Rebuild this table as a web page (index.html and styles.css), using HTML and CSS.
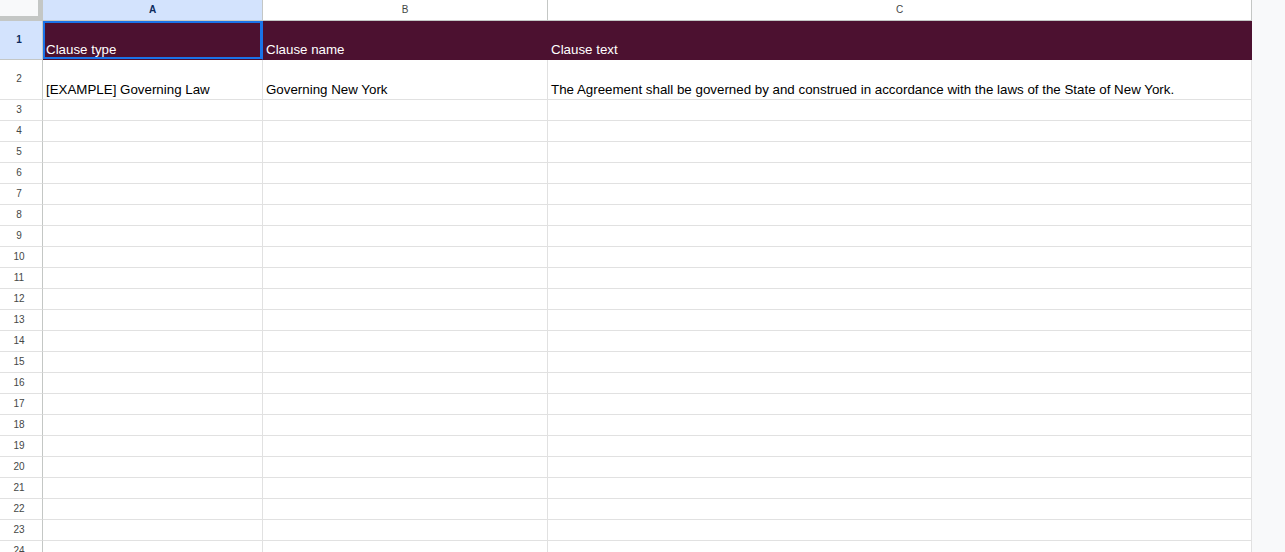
FILE: index.html
```html
<!DOCTYPE html>
<html>
<head>
<meta charset="utf-8">
<link rel="stylesheet" href="styles.css">
</head>
<body>
<div class="page">
  <div class="sheet">
    <div class="corner"></div>
    <div class="colhead active">A</div>
    <div class="colhead">B</div>
    <div class="colhead">C</div>

    <div class="rowhead active r1">1</div>
    <div class="cell hdr selected">Clause type</div>
    <div class="cell hdr">Clause name</div>
    <div class="cell hdr">Clause text</div>

    <div class="rowhead r2">2</div>
    <div class="cell r2c">[EXAMPLE] Governing Law</div>
    <div class="cell r2c">Governing New York</div>
    <div class="cell r2c">The Agreement shall be governed by and construed in accordance with the laws of the State of New York.</div>

    <div class="rowhead">3</div><div class="cell"></div><div class="cell"></div><div class="cell"></div>
    <div class="rowhead">4</div><div class="cell"></div><div class="cell"></div><div class="cell"></div>
    <div class="rowhead">5</div><div class="cell"></div><div class="cell"></div><div class="cell"></div>
    <div class="rowhead">6</div><div class="cell"></div><div class="cell"></div><div class="cell"></div>
    <div class="rowhead">7</div><div class="cell"></div><div class="cell"></div><div class="cell"></div>
    <div class="rowhead">8</div><div class="cell"></div><div class="cell"></div><div class="cell"></div>
    <div class="rowhead">9</div><div class="cell"></div><div class="cell"></div><div class="cell"></div>
    <div class="rowhead">10</div><div class="cell"></div><div class="cell"></div><div class="cell"></div>
    <div class="rowhead">11</div><div class="cell"></div><div class="cell"></div><div class="cell"></div>
    <div class="rowhead">12</div><div class="cell"></div><div class="cell"></div><div class="cell"></div>
    <div class="rowhead">13</div><div class="cell"></div><div class="cell"></div><div class="cell"></div>
    <div class="rowhead">14</div><div class="cell"></div><div class="cell"></div><div class="cell"></div>
    <div class="rowhead">15</div><div class="cell"></div><div class="cell"></div><div class="cell"></div>
    <div class="rowhead">16</div><div class="cell"></div><div class="cell"></div><div class="cell"></div>
    <div class="rowhead">17</div><div class="cell"></div><div class="cell"></div><div class="cell"></div>
    <div class="rowhead">18</div><div class="cell"></div><div class="cell"></div><div class="cell"></div>
    <div class="rowhead">19</div><div class="cell"></div><div class="cell"></div><div class="cell"></div>
    <div class="rowhead">20</div><div class="cell"></div><div class="cell"></div><div class="cell"></div>
    <div class="rowhead">21</div><div class="cell"></div><div class="cell"></div><div class="cell"></div>
    <div class="rowhead">22</div><div class="cell"></div><div class="cell"></div><div class="cell"></div>
    <div class="rowhead">23</div><div class="cell"></div><div class="cell"></div><div class="cell"></div>
    <div class="rowhead">24</div><div class="cell"></div><div class="cell"></div><div class="cell"></div>
    <div class="rowhead">25</div><div class="cell"></div><div class="cell"></div><div class="cell"></div>
  </div>
  <div class="side"></div>
</div>
</body>
</html>
```

FILE: styles.css
```css
html, body {
  margin: 0;
  padding: 0;
  height: 100%;
  overflow: hidden;
  background: #ffffff;
  font-family: "Liberation Sans", Arial, sans-serif;
}

.page {
  display: flex;
  height: 552px;
  overflow: hidden;
}

.sheet {
  width: 1252px;
  flex: none;
  display: grid;
  grid-template-columns: 43px 220px 285px 704px;
  grid-template-rows: 21px 39px 40px;
  grid-auto-rows: 21px;
  align-content: start;
}

.side {
  flex: 1;
  background: #f8f9fa;
}

.corner {
  box-sizing: border-box;
  background: #f8f9fa;
  border-right: 5px solid #c4c7c5;
  border-bottom: 5px solid #c4c7c5;
}

.colhead {
  box-sizing: border-box;
  border-right: 1px solid #c4c7c5;
  border-bottom: 1px solid #c4c7c5;
  background: #ffffff;
  color: #444746;
  font-size: 10px;
  display: flex;
  align-items: center;
  justify-content: center;
  padding-bottom: 1px;
}

.colhead.active {
  background: #d3e3fd;
  color: #0b2a5c;
  font-weight: bold;
}

.rowhead {
  box-sizing: border-box;
  border-right: 1px solid #c4c7c5;
  border-bottom: 1px solid #e1e1e1;
  background: #ffffff;
  color: #444746;
  font-size: 10px;
  display: flex;
  align-items: center;
  justify-content: center;
  padding-right: 4px;
  padding-bottom: 2px;
}

.rowhead.r1 {
  padding-bottom: 2px;
}

.rowhead.r2 {
  padding-bottom: 2px;
}

.rowhead.active {
  background: #d3e3fd;
  color: #0b2a5c;
  font-weight: bold;
  border-bottom-color: #c4c7c5;
}

.cell {
  box-sizing: border-box;
  border-right: 1px solid #e1e1e1;
  border-bottom: 1px solid #e1e1e1;
  font-size: 13.33px;
  color: #000000;
  padding: 0 3px;
  white-space: nowrap;
  overflow: hidden;
}

.cell.hdr {
  background: #4c1130;
  color: #ffffff;
  border-color: #4c1130;
  display: flex;
  align-items: flex-end;
  padding-bottom: 2px;
}

.cell.selected {
  box-shadow: inset 0 0 0 2px #1a73e8;
  border-right-color: #1a73e8;
}

.cell.r2c {
  display: flex;
  align-items: flex-end;
  padding-bottom: 2px;
}
```
